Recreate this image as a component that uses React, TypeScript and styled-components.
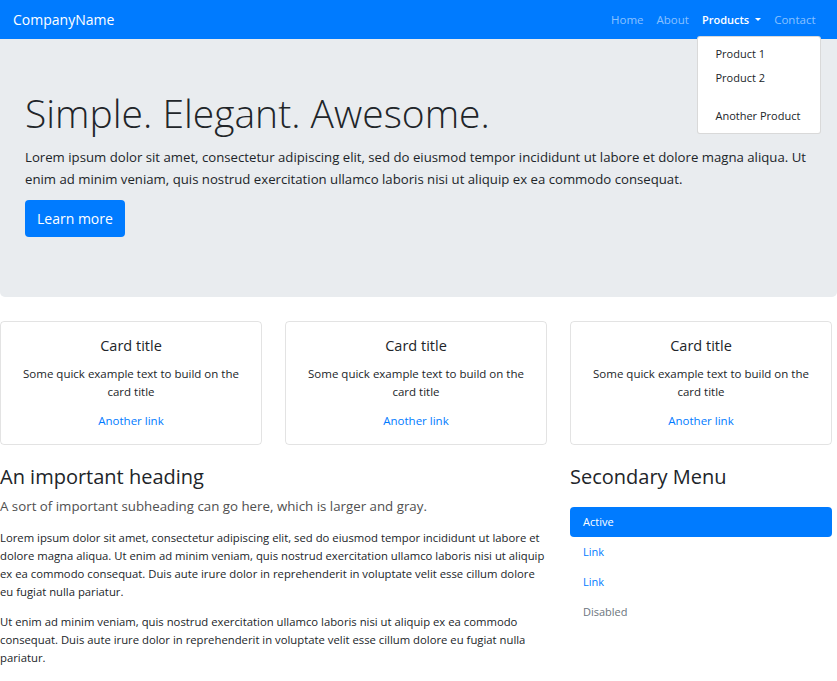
import React from 'react';
import styled, { createGlobalStyle } from 'styled-components';

const GlobalStyle = createGlobalStyle`
  html, body {
    margin: 0;
    padding: 0;
    background: #fff;
    font-family: 'Open Sans', 'Noto Sans', sans-serif;
    color: #212529;
    overflow: hidden;
  }
  * {
    box-sizing: border-box;
  }
`;

const Navbar = styled.nav`
  display: flex;
  align-items: center;
  justify-content: space-between;
  height: 39px;
  padding: 0 15px 0 13px;
  background: #007bff;
`;
const Brand = styled.a`
  color: #fff;
  font-size: 14px;
  text-decoration: none;
`;
const NavList = styled.ul`
  display: flex;
  align-items: center;
  margin: 0;
  padding: 0;
  list-style: none;
`;
const NavItem = styled.li`
  position: relative;
`;
const NavLink = styled.a<{ $active?: boolean }>`
  display: flex;
  align-items: center;
  gap: 6px;
  padding: 0 6.5px;
  font-size: ${(p) => (p.$active ? '11px' : '11.5px')};
  font-weight: ${(p) => (p.$active ? 600 : 400)};
  color: ${(p) => (p.$active ? '#fff' : 'rgba(255, 255, 255, 0.55)')};
  text-decoration: none;
`;
const Caret = styled.span`
  width: 0;
  height: 0;
  border-left: 3px solid transparent;
  border-right: 3px solid transparent;
  border-top: 3px solid #fff;
`;
const Dropdown = styled.div`
  position: absolute;
  top: 24px;
  left: 2px;
  width: 124px;
  padding: 5px 0;
  background: #fff;
  border: 1px solid rgba(0, 0, 0, 0.15);
  border-radius: 3px;
  z-index: 10;
`;
const DropdownItem = styled.a`
  display: block;
  height: 24px;
  line-height: 24px;
  padding: 0 17px;
  font-size: 11px;
  color: #212529;
  white-space: nowrap;
`;
const DropdownDivider = styled.div`
  height: 14px;
`;

const Jumbotron = styled.section`
  padding: 51px 25px 60px;
  background: #e9ecef;
  border-radius: 0 0 5px 5px;
`;
const Display = styled.h1`
  margin: 0 0 9px;
  font-size: 39px;
  font-weight: 300;
  line-height: 1.2;
  color: #212529;
`;
const Lead = styled.p`
  margin: 0 0 10px;
  font-size: 13.2px;
  line-height: 22px;
`;
const PrimaryButton = styled.a`
  display: inline-flex;
  align-items: center;
  height: 37px;
  padding: 0 12px;
  background: #007bff;
  border-radius: 4px;
  color: #fff;
  font-size: 14px;
`;

const Container = styled.div`
  width: 832px;
`;
const CardRow = styled.div`
  display: grid;
  grid-template-columns: repeat(3, 262px);
  gap: 23px;
  margin-top: 24px;
`;
const Card = styled.div`
  height: 124px;
  padding: 15px 20px;
  border: 1px solid rgba(0, 0, 0, 0.11);
  border-radius: 4px;
  text-align: center;
`;
const CardTitle = styled.h5`
  margin: 0 0 10px;
  font-size: 14.5px;
  font-weight: 400;
  line-height: 18px;
`;
const CardText = styled.p`
  margin: 0 0 11px;
  font-size: 11.5px;
  line-height: 18px;
`;
const CardLink = styled.a`
  display: block;
  font-size: 11.5px;
  line-height: 18px;
  color: #007bff;
`;

const Columns = styled.div`
  display: grid;
  grid-template-columns: 550px 262px;
  gap: 20px;
  margin-top: 17px;
`;
const Heading = styled.h3`
  margin: 0 0 4px;
  font-size: 20px;
  font-weight: 400;
  line-height: 30px;
`;
const SubHeading = styled.p`
  margin: 0 0 13px;
  font-size: 13.3px;
  line-height: 20px;
  color: #505050;
`;
const BodyText = styled.p`
  margin: 0 0 12px;
  font-size: 11.3px;
  line-height: 18px;
`;
const Pills = styled.ul`
  display: flex;
  flex-direction: column;
  margin: 15px 0 0;
  padding: 0;
  list-style: none;
`;
const Pill = styled.li<{ $state?: 'active' | 'disabled' }>`
  height: 30px;
  line-height: 30px;
  padding: 0 13px;
  border-radius: 4px;
  font-size: 11px;
  background: ${(p) => (p.$state === 'active' ? '#007bff' : 'transparent')};
  color: ${(p) =>
    p.$state === 'active' ? '#fff' : p.$state === 'disabled' ? '#6c757d' : '#007bff'};
`;

const cards = [1, 2, 3];

export default function App() {
  return (
    <>
      <GlobalStyle />
      <Navbar>
        <Brand>CompanyName</Brand>
        <NavList>
          <NavItem>
            <NavLink>Home</NavLink>
          </NavItem>
          <NavItem>
            <NavLink>About</NavLink>
          </NavItem>
          <NavItem>
            <NavLink $active>
              Products <Caret />
            </NavLink>
            <Dropdown>
              <DropdownItem>Product 1</DropdownItem>
              <DropdownItem>Product 2</DropdownItem>
              <DropdownDivider />
              <DropdownItem>Another Product</DropdownItem>
            </Dropdown>
          </NavItem>
          <NavItem>
            <NavLink>Contact</NavLink>
          </NavItem>
        </NavList>
      </Navbar>
      <Jumbotron>
        <Display>Simple. Elegant. Awesome.</Display>
        <Lead>
          Lorem ipsum dolor sit amet, consectetur adipiscing elit, sed do eiusmod tempor incididunt ut
          labore et dolore magna aliqua. Ut enim ad minim veniam, quis nostrud exercitation ullamco
          laboris nisi ut aliquip ex ea commodo consequat.
        </Lead>
        <PrimaryButton>Learn more</PrimaryButton>
      </Jumbotron>
      <Container>
        <CardRow>
          {cards.map((c) => (
            <Card key={c}>
              <CardTitle>Card title</CardTitle>
              <CardText>Some quick example text to build on the card title</CardText>
              <CardLink>Another link</CardLink>
            </Card>
          ))}
        </CardRow>
        <Columns>
          <div>
            <Heading>An important heading</Heading>
            <SubHeading>A sort of important subheading can go here, which is larger and gray.</SubHeading>
            <BodyText>
              Lorem ipsum dolor sit amet, consectetur adipiscing elit, sed do eiusmod tempor incididunt
              ut labore et dolore magna aliqua. Ut enim ad minim veniam, quis nostrud exercitation
              ullamco laboris nisi ut aliquip ex ea commodo consequat. Duis aute irure dolor in
              reprehenderit in voluptate velit esse cillum dolore eu fugiat nulla pariatur.
            </BodyText>
            <BodyText>
              Ut enim ad minim veniam, quis nostrud exercitation ullamco laboris nisi ut aliquip ex ea
              commodo consequat. Duis aute irure dolor in reprehenderit in voluptate velit esse cillum
              dolore eu fugiat nulla pariatur.
            </BodyText>
          </div>
          <div>
            <Heading>Secondary Menu</Heading>
            <Pills>
              <Pill $state="active">Active</Pill>
              <Pill>Link</Pill>
              <Pill>Link</Pill>
              <Pill $state="disabled">Disabled</Pill>
            </Pills>
          </div>
        </Columns>
      </Container>
    </>
  );
}
